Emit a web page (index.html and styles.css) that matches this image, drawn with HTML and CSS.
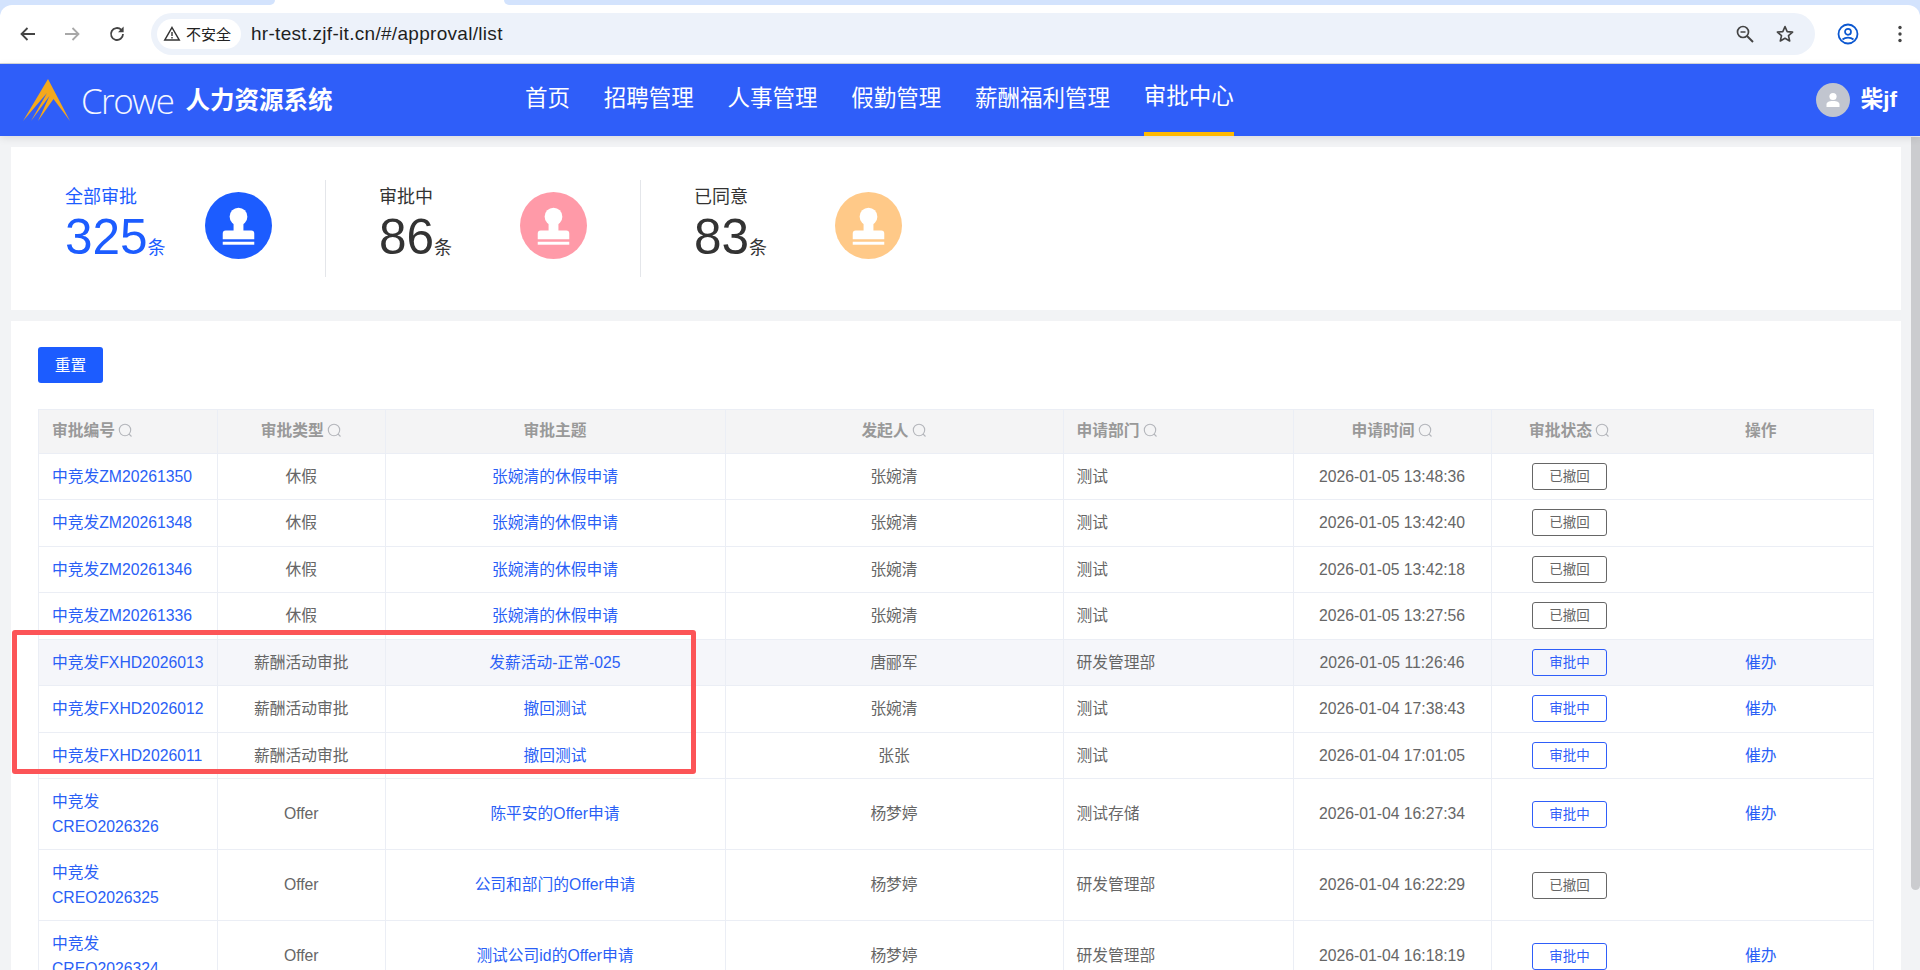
FILE: index.html
```html
<!DOCTYPE html>
<html lang="zh-CN">
<head>
<meta charset="utf-8">
<title>审批中心</title>
<link rel="stylesheet" href="styles.css">
</head>
<body>
<div class="browser">
  <div class="tabstrip"><span class="strip-left"></span><span class="strip-tab"></span><span class="strip-right"></span></div>
  <div class="toolbar">
    <button class="tb-btn"><svg width="20" height="20" viewBox="0 0 20 20"><path d="M17 10H4M9.5 4 3.5 10l6 6" fill="none" stroke="#444" stroke-width="1.8"/></svg></button>
    <button class="tb-btn"><svg width="20" height="20" viewBox="0 0 20 20"><path d="M3 10h13M10.5 4l6 6-6 6" fill="none" stroke="#a8a8a8" stroke-width="1.8"/></svg></button>
    <button class="tb-btn tb-reload"><svg width="20" height="20" viewBox="0 0 20 20"><path d="M16 10a6 6 0 1 1-1.8-4.3" fill="none" stroke="#444" stroke-width="1.8"/><path d="M16.6 2.6v5.6H11z" fill="#444"/></svg></button>
    <div class="omnibox">
      <div class="chip">
        <svg width="18" height="18" viewBox="0 0 18 18"><path d="M9 2.500 16.200 15H1.800z" fill="none" stroke="#333" stroke-width="1.500"/><path d="M9 7v4M9 12v1.500" stroke="#333" stroke-width="1.400"/></svg>
        <span>不安全</span>
      </div>
      <span class="url">hr-test.zjf-it.cn/#/approval/list</span>
      <svg class="omni-zoom" width="20" height="20" viewBox="0 0 20 20"><circle cx="8" cy="8" r="5.500" fill="none" stroke="#444" stroke-width="1.700"/><path d="M12 12l6 6" stroke="#444" stroke-width="1.900"/><path d="M5.500 8h5" stroke="#444" stroke-width="1.500"/></svg>
      <svg class="omni-star" width="20" height="20" viewBox="0 0 20 20"><path d="M10 2.600l2.200 5 5.400.5-4.100 3.600 1.200 5.300L10 14.200 5.300 17l1.200-5.300L2.400 8.100l5.400-.5z" fill="none" stroke="#444" stroke-width="1.600" stroke-linejoin="round"/></svg>
    </div>
    <svg class="tb-profile" width="22" height="22" viewBox="0 0 22 22"><circle cx="11" cy="11" r="9.500" fill="none" stroke="#0b57d0" stroke-width="1.800"/><circle cx="11" cy="8.800" r="3" fill="none" stroke="#0b57d0" stroke-width="1.700"/><path d="M5.500 16.500c3-2.600 8-2.600 11 0" fill="none" stroke="#0b57d0" stroke-width="1.800"/></svg>
    <svg class="tb-menu" width="6" height="20" viewBox="0 0 6 20"><circle cx="3" cy="3.500" r="1.700" fill="#444"/><circle cx="3" cy="10" r="1.700" fill="#444"/><circle cx="3" cy="16.500" r="1.700" fill="#444"/></svg>
  </div>
</div>

<header class="topnav">
  <div class="brand">
    <svg class="brand-mark" width="48" height="43" viewBox="0 0 48 43"><path d="M25 0 47 42 30.500 20 15 42 26.500 17 8 42 24 14 0 42z" fill="#f4a81c"/></svg>
    <span class="brand-crowe">Crowe</span>
    <span class="brand-title">人力资源系统</span>
  </div>
  <nav class="nav">
    <a class="nav-item">首页</a>
    <a class="nav-item">招聘管理</a>
    <a class="nav-item">人事管理</a>
    <a class="nav-item">假勤管理</a>
    <a class="nav-item">薪酬福利管理</a>
    <a class="nav-item nav-active">审批中心</a>
  </nav>
  <div class="user">
    <span class="avatar"><svg width="34" height="34" viewBox="0 0 34 34"><circle cx="17" cy="13.500" r="3.600" fill="#fff"/><path d="M10.500 24v-2.500c0-2.200 2-3.500 6.500-3.500s6.500 1.300 6.500 3.500V24z" fill="#fff"/></svg></span>
    <span class="user-name">柴jf</span>
  </div>
</header>

<main class="main">
  <section class="card stats">
    <div class="stat stat-blue">
      <div class="stat-text"><div class="stat-label">全部审批</div><div class="stat-num">325<small>条</small></div></div>
      <svg class="stamp" width="67" height="67" viewBox="0 0 68 68"><circle cx="34" cy="34" r="34" fill="#1c5cff"/><circle cx="34" cy="25" r="9" fill="#fff"/><path d="M29 28h10v11h8a3 3 0 0 1 3 3v6H18v-6a3 3 0 0 1 3-3h8z" fill="#fff"/><rect x="18" y="50.500" width="32" height="3" fill="#fff"/></svg>
    </div>
    <div class="stat">
      <div class="stat-text"><div class="stat-label">审批中</div><div class="stat-num">86<small>条</small></div></div>
      <svg class="stamp" width="67" height="67" viewBox="0 0 68 68"><circle cx="34" cy="34" r="34" fill="#ff9aa8"/><circle cx="34" cy="25" r="9" fill="#fff"/><path d="M29 28h10v11h8a3 3 0 0 1 3 3v6H18v-6a3 3 0 0 1 3-3h8z" fill="#fff"/><rect x="18" y="50.500" width="32" height="3" fill="#fff"/></svg>
    </div>
    <div class="stat stat-last">
      <div class="stat-text"><div class="stat-label">已同意</div><div class="stat-num">83<small>条</small></div></div>
      <svg class="stamp" width="67" height="67" viewBox="0 0 68 68"><circle cx="34" cy="34" r="34" fill="#ffc988"/><circle cx="34" cy="25" r="9" fill="#fff"/><path d="M29 28h10v11h8a3 3 0 0 1 3 3v6H18v-6a3 3 0 0 1 3-3h8z" fill="#fff"/><rect x="18" y="50.500" width="32" height="3" fill="#fff"/></svg>
    </div>
  </section>

  <section class="card list">
    <button class="btn-reset">重置</button>
    <table class="grid">
      <colgroup>
        <col class="c1"><col class="c2"><col class="c3"><col class="c4"><col class="c5"><col class="c6"><col class="c7"><col class="c8">
      </colgroup>
      <thead>
        <tr>
          <th class="left">审批编号<svg class="q" width="15" height="15" viewBox="0 0 15 15"><circle cx="7" cy="7" r="5.700"/><path d="M11 11l2.500 2.500"/></svg></th>
          <th>审批类型<svg class="q" width="15" height="15" viewBox="0 0 15 15"><circle cx="7" cy="7" r="5.700"/><path d="M11 11l2.500 2.500"/></svg></th>
          <th>审批主题</th>
          <th>发起人<svg class="q" width="15" height="15" viewBox="0 0 15 15"><circle cx="7" cy="7" r="5.700"/><path d="M11 11l2.500 2.500"/></svg></th>
          <th class="left">申请部门<svg class="q" width="15" height="15" viewBox="0 0 15 15"><circle cx="7" cy="7" r="5.700"/><path d="M11 11l2.500 2.500"/></svg></th>
          <th>申请时间<svg class="q" width="15" height="15" viewBox="0 0 15 15"><circle cx="7" cy="7" r="5.700"/><path d="M11 11l2.500 2.500"/></svg></th>
          <th class="no-rule">审批状态<svg class="q" width="15" height="15" viewBox="0 0 15 15"><circle cx="7" cy="7" r="5.700"/><path d="M11 11l2.500 2.500"/></svg></th>
          <th>操作</th>
        </tr>
      </thead>
      <tbody>
        <tr><td class="left link">中竞发ZM20261350</td><td>休假</td><td class="link">张婉清的休假申请</td><td>张婉清</td><td class="left">测试</td><td>2026-01-05 13:48:36</td><td class="no-rule"><span class="tag">已撤回</span></td><td></td></tr>
        <tr><td class="left link">中竞发ZM20261348</td><td>休假</td><td class="link">张婉清的休假申请</td><td>张婉清</td><td class="left">测试</td><td>2026-01-05 13:42:40</td><td class="no-rule"><span class="tag">已撤回</span></td><td></td></tr>
        <tr><td class="left link">中竞发ZM20261346</td><td>休假</td><td class="link">张婉清的休假申请</td><td>张婉清</td><td class="left">测试</td><td>2026-01-05 13:42:18</td><td class="no-rule"><span class="tag">已撤回</span></td><td></td></tr>
        <tr><td class="left link">中竞发ZM20261336</td><td>休假</td><td class="link">张婉清的休假申请</td><td>张婉清</td><td class="left">测试</td><td>2026-01-05 13:27:56</td><td class="no-rule"><span class="tag">已撤回</span></td><td></td></tr>
        <tr class="hover"><td class="left link">中竞发FXHD2026013</td><td>薪酬活动审批</td><td class="link">发薪活动-正常-025</td><td>唐郦军</td><td class="left">研发管理部</td><td>2026-01-05 11:26:46</td><td class="no-rule"><span class="tag tag-blue">审批中</span></td><td class="link">催办</td></tr>
        <tr><td class="left link">中竞发FXHD2026012</td><td>薪酬活动审批</td><td class="link">撤回测试</td><td>张婉清</td><td class="left">测试</td><td>2026-01-04 17:38:43</td><td class="no-rule"><span class="tag tag-blue">审批中</span></td><td class="link">催办</td></tr>
        <tr><td class="left link">中竞发FXHD2026011</td><td>薪酬活动审批</td><td class="link">撤回测试</td><td>张张</td><td class="left">测试</td><td>2026-01-04 17:01:05</td><td class="no-rule"><span class="tag tag-blue">审批中</span></td><td class="link">催办</td></tr>
        <tr class="tall"><td class="left link">中竞发<br>CREO2026326</td><td>Offer</td><td class="link">陈平安的Offer申请</td><td>杨梦婷</td><td class="left">测试存储</td><td>2026-01-04 16:27:34</td><td class="no-rule"><span class="tag tag-blue">审批中</span></td><td class="link">催办</td></tr>
        <tr class="tall"><td class="left link">中竞发<br>CREO2026325</td><td>Offer</td><td class="link">公司和部门的Offer申请</td><td>杨梦婷</td><td class="left">研发管理部</td><td>2026-01-04 16:22:29</td><td class="no-rule"><span class="tag">已撤回</span></td><td></td></tr>
        <tr class="tall"><td class="left link">中竞发<br>CREO2026324</td><td>Offer</td><td class="link">测试公司id的Offer申请</td><td>杨梦婷</td><td class="left">研发管理部</td><td>2026-01-04 16:18:19</td><td class="no-rule"><span class="tag tag-blue">审批中</span></td><td class="link">催办</td></tr>
      </tbody>
    </table>
    <div class="callout"></div>
  </section>
</main>
<div class="scroll-thumb"></div>
</body>
</html>
```

FILE: styles.css
```css
* { box-sizing: border-box; }
html, body { margin: 0; height: 100%; }
body {
  display: flex;
  flex-direction: column;
  overflow: hidden;
  position: relative;
  background: #f2f3f5;
  font-family: "Liberation Sans", "Noto Sans CJK SC", sans-serif;
  color: #666;
}

/* browser chrome */
.browser { flex: none; background: #d3e3fd; }
.tabstrip { display: flex; height: 5px; background: #fff; }
.strip-left { width: 275px; background: #d3e3fd; border-bottom-right-radius: 8px; }
.strip-tab { width: 229px; }
.strip-right { flex: 1; background: #d3e3fd; border-bottom-left-radius: 8px; }
.toolbar {
  display: flex;
  align-items: center;
  height: 59px;
  padding: 0 0 1px 0;
  background: #fff;
  border-bottom: 1px solid #d6d8dc;
  border-radius: 12px 12px 0 0;
}
.tb-btn {
  width: 44px;
  height: 44px;
  margin: 0;
  padding: 0;
  border: 0;
  background: none;
  display: flex;
  align-items: center;
  justify-content: center;
}
.tb-btn:first-child { margin-left: 6px; }
.tb-reload { padding-left: 2px; }
.omnibox {
  display: flex;
  align-items: center;
  width: 1664px;
  height: 42px;
  margin-left: 13px;
  padding: 0 6px;
  border-radius: 21px;
  background: #edf2fa;
}
.chip {
  display: flex;
  align-items: center;
  gap: 5px;
  height: 30px;
  width: 84px;
  padding-left: 6px;
  background: #fff;
  border-radius: 15px;
  font-size: 15px;
  color: #222;
}
.url { margin-left: 10px; font-size: 19px; color: #1f1f1f; letter-spacing: 0.3px; }
.omni-zoom { margin-left: auto; }
.omni-star { margin: 0 14px 0 20px; }
.tb-profile { margin-left: 22px; }
.tb-menu { margin-left: 38px; }

/* app header */
.topnav {
  flex: none;
  position: relative;
  z-index: 1;
  display: flex;
  align-items: stretch;
  height: 72px;
  background: #2f5ef9;
  box-shadow: 0 2px 8px rgba(0, 0, 0, .1);
  color: #fff;
}
.brand { display: flex; align-items: center; width: 525px; padding-left: 23px; }
.brand-mark { margin-top: 1px; }
.brand-crowe {
  margin-left: 10px;
  font-family: "Open Sans", sans-serif;
  font-weight: 300;
  font-size: 35px;
  letter-spacing: -1.600px;
  color: #f4f6ff;
}
.brand-title { margin: 0 0 4px 12px; font-size: 24.500px; font-weight: 700; }
.nav { display: flex; gap: 33.750px; }
.nav-item {
  display: flex;
  align-items: center;
  font-size: 22.500px;
  color: #fff;
  height: 72px;
  padding-bottom: 9px;
}
.nav-active { padding-bottom: 8px; border-bottom: 4px solid #ffb900; }
.user { display: flex; align-items: center; margin-left: auto; padding-right: 23px; }
.avatar { width: 34px; height: 34px; border-radius: 50%; background: #c1c5cf; display: block; }
.avatar svg { display: block; }
.user-name { margin: 0 0 6px 11px; font-size: 22.500px; font-weight: 700; }

/* content */
.main { flex: 1; min-height: 0; padding: 11px 19px 0 11px; overflow: hidden; }
.card { background: #fff; }
.stats { display: flex; height: 163px; padding-top: 33px; }
.stat {
  display: flex;
  width: 315px;
  height: 97px;
  padding-left: 54px;
  border-right: 1px solid #e4e6ea;
}
.stat + .stat { padding-left: 53px; }
.stat + .stat .stat-text { width: 141px; }
.stat-last { border-right: 0; }
.stat-text { width: 140px; padding-top: 4px; color: #333; }
.stat-label { font-size: 18px; line-height: 26px; }
.stat-num { font-size: 49.500px; line-height: 50px; margin-top: 2px; }
.stat-num small { font-size: 18px; }
.stat-blue .stat-text { color: #1c5cff; }
.stamp { margin-top: 12px; }

.list { position: relative; margin-top: 11px; height: 700px; padding: 26px 28px 0 27px; }
.btn-reset {
  display: block;
  width: 65px;
  height: 36px;
  padding: 0 0 2px;
  border: 0;
  border-radius: 3px;
  background: #1c5cff;
  color: #fff;
  font: inherit;
  font-size: 15.750px;
}

.grid {
  table-layout: fixed;
  width: 1834.500px;
  margin-top: 26px;
  border-collapse: collapse;
  font-size: 15.750px;
}
.c1 { width: 179px; }
.c2 { width: 167.500px; }
.c3 { width: 340px; }
.c4 { width: 338px; }
.c5 { width: 230px; }
.c6 { width: 198px; }
.c7 { width: 158px; }
.c8 { width: 224px; }
.grid th, .grid td {
  padding: 0 13.500px;
  border: 1px solid #ebeef5;
  text-align: center;
  font-weight: 400;
  line-height: 25.500px;
  overflow: hidden;
}
.grid th {
  height: 43.500px;
  padding-bottom: 2px;
  background: #f4f4f5;
  color: #999;
  font-weight: 700;
}
.grid tbody tr { height: 46.500px; }
.grid tbody tr.tall { height: 71px; }
.grid .left { text-align: left; padding-left: 13px; }
.grid .no-rule { border-right: 0; padding-right: 15px; }
.grid .no-rule + th, .grid .no-rule + td { border-left: 0; }
.grid .link { color: #2a5ff6; }
.grid tr.hover td { background: #f5f6fa; }
.q {
  margin-left: 3px;
  vertical-align: -2px;
  fill: none;
  stroke: #b4b6bb;
  stroke-width: 1.100;
}
.tag {
  display: inline-block;
  width: 75px;
  height: 27px;
  border: 1px solid #666;
  border-radius: 3px;
  font-size: 13.500px;
  line-height: 25px;
  color: #666;
  vertical-align: middle;
}
.tag-blue { border-color: #2f5ef9; color: #2f5ef9; }

.callout {
  position: absolute;
  left: 1px;
  top: 309px;
  width: 684px;
  height: 144px;
  border: 5px solid #fc5457;
  border-radius: 3px;
  pointer-events: none;
}
.scroll-thumb {
  position: absolute;
  right: 0;
  top: 137px;
  width: 9px;
  height: 753px;
  border-radius: 0 0 5px 5px;
  background: #cbcccf;
}
```
